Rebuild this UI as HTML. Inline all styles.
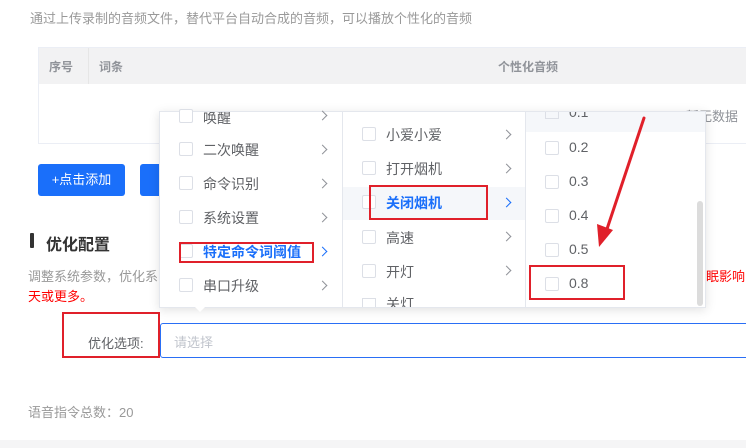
<!DOCTYPE html>
<html><head><meta charset="utf-8"><style>
*{margin:0;padding:0;box-sizing:border-box}
body{width:746px;height:448px;overflow:hidden;background:#fff;font-family:"Liberation Sans","Noto Sans CJK SC",sans-serif;font-size:13px;color:#606266;position:relative}
.a{position:absolute;white-space:nowrap}
.d{font-size:14px}
.cb{position:absolute;width:14px;height:14px;border:1px solid #dcdfe6;border-radius:2px;background:#fff}
.chev{position:absolute;width:7px;height:7px;border-top:1.3px solid #909399;border-right:1.3px solid #909399;transform:rotate(45deg)}
.rb{position:absolute;border:2px solid #e0202a}
</style></head><body>
<div class="a" style="left:30px;top:8px;color:#999">通过上传录制的音频文件，替代平台自动合成的音频，可以播放个性化的音频</div>
<div class="a" style="left:38px;top:47px;width:720px;height:97px;border:1px solid #ebeef5"></div>
<div class="a" style="left:39px;top:48px;width:710px;height:36px;background:#f2f2f3"></div>
<div class="a" style="left:88px;top:48px;width:1px;height:36px;background:#e6e6e6"></div>
<div class="a" style="left:49px;top:58px;font-weight:bold;font-size:12px;color:#909399">序号</div>
<div class="a" style="left:99px;top:58px;font-weight:bold;font-size:12px;color:#909399">词条</div>
<div class="a" style="left:498px;top:58px;font-weight:bold;font-size:12px;color:#909399">个性化音频</div>
<div class="a" style="left:686px;top:106px;color:#909399">暂无数据</div>
<div class="a" style="left:38px;top:164px;width:87px;height:32px;background:#1a6ffa;border-radius:3px;color:#fff;text-align:center;line-height:32px">+点击添加</div>
<div class="a" style="left:140px;top:164px;width:60px;height:32px;background:#1a6ffa;border-radius:3px"></div>
<div class="a" style="left:30px;top:233px;width:4px;height:15px;background:#333;border-radius:1px"></div>
<div class="a" style="left:46px;top:231px;font-size:16px;font-weight:bold;color:#333">优化配置</div>
<div class="a" style="left:28px;top:266px;color:#999">调整系统参数，优化系</div>
<div class="a" style="left:28px;top:286px;color:#f00">天或更多。</div>
<div class="a" style="left:706px;top:266px;color:#f00">眠影响</div>
<div class="a" style="left:160px;top:323px;width:600px;height:35px;border:1px solid #2a6ff5;border-radius:3px"></div>
<div class="a" style="left:174px;top:332px;color:#c0c4cc">请选择</div>
<div class="a" style="left:88px;top:333px;color:#606266">优化选项:</div>
<div class="rb" style="left:62px;top:312px;width:98px;height:46px"></div>
<div class="a" style="left:28px;top:402px;color:#999">语音指令总数：20</div>
<div class="a" style="left:0;top:440px;width:746px;height:8px;background:#f5f5f6"></div>

<div class="a" style="left:159px;top:111px;width:547px;height:197px;background:#fff;border:1px solid #e4e7ed;box-shadow:0 2px 10px rgba(0,0,0,.12);overflow:hidden">
 <div class="a" style="left:182px;top:0;width:1px;height:197px;background:#e4e7ed"></div>
 <div class="a" style="left:365px;top:0;width:1px;height:197px;background:#e4e7ed"></div>
 <div class="a" style="left:183px;top:75px;width:182px;height:33px;background:#f5f7fa"></div>
 <div class="a" style="left:366px;top:0;width:180px;height:20px;background:#f5f7fa"></div>
 <div class="a" style="left:537px;top:89px;width:6px;height:105px;background:#dcdcdc;border-radius:3px"></div>
 <div class="a d" style="left:409px;top:-8px">0.1</div>
 <div class="a d" style="left:226px;top:182px">关灯</div>
 <div class="a d" style="left:43px;top:-4px">唤醒</div>
</div>
<!-- col1 -->
<div class="cb" style="left:179px;top:109px"></div><div class="chev" style="left:319px;top:112px"></div>
<div class="cb" style="left:179px;top:142px"></div><div class="a d" style="left:203px;top:140px">二次唤醒</div><div class="chev" style="left:319px;top:146px"></div>
<div class="cb" style="left:179px;top:176px"></div><div class="a d" style="left:203px;top:174px">命令识别</div><div class="chev" style="left:319px;top:180px"></div>
<div class="cb" style="left:179px;top:210px"></div><div class="a d" style="left:203px;top:208px">系统设置</div><div class="chev" style="left:319px;top:214px"></div>
<div class="cb" style="left:179px;top:244px"></div><div class="a d" style="left:203px;top:242px;color:#1a6ffa;font-weight:bold">特定命令词阈值</div><div class="chev" style="left:319px;top:248px;border-color:#1a6ffa"></div>
<div class="cb" style="left:179px;top:278px"></div><div class="a d" style="left:203px;top:276px">串口升级</div><div class="chev" style="left:319px;top:282px"></div>
<!-- col2 -->
<div class="cb" style="left:362px;top:127px"></div><div class="a d" style="left:386px;top:125px">小爱小爱</div><div class="chev" style="left:503px;top:131px"></div>
<div class="cb" style="left:362px;top:161px"></div><div class="a d" style="left:386px;top:159px">打开烟机</div><div class="chev" style="left:503px;top:165px"></div>
<div class="cb" style="left:362px;top:195px"></div><div class="a d" style="left:386px;top:193px;color:#1a6ffa;font-weight:bold">关闭烟机</div><div class="chev" style="left:503px;top:199px;border-color:#1a6ffa"></div>
<div class="cb" style="left:362px;top:230px"></div><div class="a d" style="left:386px;top:228px">高速</div><div class="chev" style="left:503px;top:233px"></div>
<div class="cb" style="left:362px;top:264px"></div><div class="a d" style="left:386px;top:262px">开灯</div><div class="chev" style="left:503px;top:267px"></div>
<div class="a" style="left:362px;top:298px;width:14px;height:9px;border:1px solid #dcdfe6;border-bottom:none"></div>
<!-- col3 -->
<div class="a" style="left:545px;top:112px;width:14px;height:7px;border:1px solid #dcdfe6;border-top:none"></div>
<div class="cb" style="left:545px;top:141px"></div><div class="a d" style="left:569px;top:139px">0.2</div>
<div class="cb" style="left:545px;top:175px"></div><div class="a d" style="left:569px;top:173px">0.3</div>
<div class="cb" style="left:545px;top:209px"></div><div class="a d" style="left:569px;top:207px">0.4</div>
<div class="cb" style="left:545px;top:243px"></div><div class="a d" style="left:569px;top:241px">0.5</div>
<div class="cb" style="left:545px;top:277px"></div><div class="a d" style="left:569px;top:275px">0.8</div>
<!-- caret -->
<div class="a" style="left:194px;top:306px;width:0;height:0;border-left:6px solid transparent;border-right:6px solid transparent;border-top:6px solid #fff"></div>
<!-- red boxes -->
<div class="rb" style="left:179px;top:242px;width:135px;height:21px"></div>
<div class="rb" style="left:369px;top:185px;width:119px;height:35px"></div>
<div class="rb" style="left:529px;top:265px;width:96px;height:35px"></div>
<svg class="a" style="left:0;top:0" width="746" height="448"><line x1="644" y1="118" x2="606" y2="232" stroke="#e0202a" stroke-width="3" stroke-linecap="round"/><polygon points="599,247 597,224 613,230" fill="#e0202a"/></svg>
</body></html>
